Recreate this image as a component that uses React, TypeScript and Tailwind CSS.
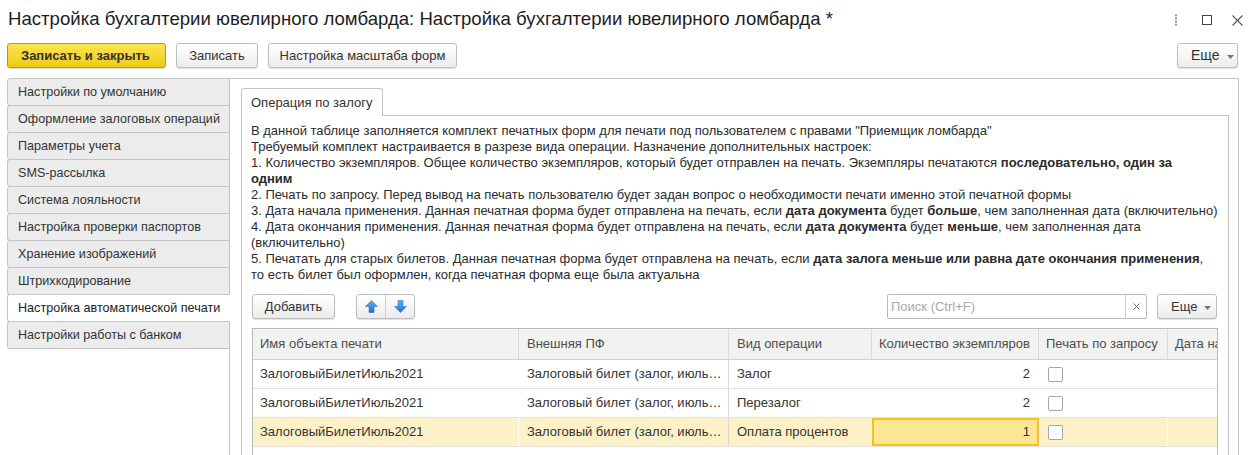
import React from 'react';

const FONT = "font-['Liberation_Sans',Arial,sans-serif]";

function Btn({ children, className }: { children: React.ReactNode; className?: string }) {
  return (
    <div
      className={
        'h-[25px] flex items-center border border-[#bdbdbd] rounded-[3px] bg-linear-to-b from-white to-[#ececec] shadow-[0_1px_1px_rgba(0,0,0,0.12)] text-[13px] text-[#333] whitespace-nowrap ' +
        (className || '')
      }
    >
      {children}
    </div>
  );
}

function Caret() {
  return (
    <svg width="7" height="4" viewBox="0 0 7 4" className="ml-[7px] mt-[2px]">
      <polygon points="0,0 7,0 3.5,4" fill="#777" />
    </svg>
  );
}

function ArrowUp() {
  return (
    <svg width="13" height="13" viewBox="0 0 13 13">
      <defs>
        <linearGradient id="gup" x1="0" y1="0" x2="0" y2="1">
          <stop offset="0" stopColor="#5fb2f2" />
          <stop offset="1" stopColor="#2173c9" />
        </linearGradient>
      </defs>
      <polygon points="6.5,0.5 12.5,6.5 9,6.5 9,12.5 4,12.5 4,6.5 0.5,6.5" fill="url(#gup)" stroke="#2a78c8" strokeWidth="0.6" strokeLinejoin="round" />
    </svg>
  );
}

function ArrowDown() {
  return (
    <svg width="13" height="13" viewBox="0 0 13 13">
      <defs>
        <linearGradient id="gdn" x1="0" y1="0" x2="0" y2="1">
          <stop offset="0" stopColor="#5fb2f2" />
          <stop offset="1" stopColor="#2173c9" />
        </linearGradient>
      </defs>
      <polygon points="4,0.5 9,0.5 9,6.5 12.5,6.5 6.5,12.5 0.5,6.5 4,6.5" fill="url(#gdn)" stroke="#2a78c8" strokeWidth="0.6" strokeLinejoin="round" />
    </svg>
  );
}

const navItems = [
  'Настройки по умолчанию',
  'Оформление залоговых операций',
  'Параметры учета',
  'SMS-рассылка',
  'Система лояльности',
  'Настройка проверки паспортов',
  'Хранение изображений',
  'Штрихкодирование',
  'Настройка автоматической печати',
  'Настройки работы с банком',
];

const rows = [
  { name: 'ЗалоговыйБилетИюль2021', pf: 'Залоговый билет (залог, июль 2021)', op: 'Залог', qty: 2, sel: false },
  { name: 'ЗалоговыйБилетИюль2021', pf: 'Залоговый билет (залог, июль 2021)', op: 'Перезалог', qty: 2, sel: false },
  { name: 'ЗалоговыйБилетИюль2021', pf: 'Залоговый билет (залог, июль 2021)', op: 'Оплата процентов', qty: 1, sel: true },
];

function Checkbox() {
  return <div className="ml-[9px] w-[15px] h-[15px] border border-[#a6a6a6] rounded-[2px] bg-white" />;
}

export default function App() {
  return (
    <div className={'w-[1254px] h-[455px] overflow-hidden bg-white text-[#333] relative ' + FONT}>
      {/* Title bar */}
      <div className="flex items-start h-[43px] pl-[8px] pt-[7px]">
        <div className="text-[18.6px] leading-[24px] text-[#1e1e1e] whitespace-nowrap">
          Настройка бухгалтерии ювелирного ломбарда: Настройка бухгалтерии ювелирного ломбарда *
        </div>
        <div className="ml-auto flex items-center h-[24px] mt-[1px] pr-[11px]">
          <svg width="4" height="12" viewBox="0 0 4 12">
            <circle cx="2" cy="1.3" r="1.1" fill="#8a8a8a" />
            <circle cx="2" cy="4.4" r="1.1" fill="#8a8a8a" />
            <circle cx="2" cy="7.6" r="1.1" fill="#8a8a8a" />
            <circle cx="2" cy="10.7" r="1.1" fill="#8a8a8a" />
          </svg>
          <svg width="10" height="10" viewBox="0 0 10 10" className="ml-[24px]">
            <rect x="0.5" y="0.5" width="9" height="9" fill="none" stroke="#444" strokeWidth="1" />
          </svg>
          <svg width="11" height="11" viewBox="0 0 11 11" className="ml-[20px]">
            <line x1="0.5" y1="0.5" x2="10.5" y2="10.5" stroke="#555" strokeWidth="1.1" />
            <line x1="10.5" y1="0.5" x2="0.5" y2="10.5" stroke="#555" strokeWidth="1.1" />
          </svg>
        </div>
      </div>

      {/* Command bar */}
      <div className="flex items-center h-[25px] pl-[7px] pr-[16px]">
        <div className="h-[25px] w-[159px] flex items-center pl-[13px] border border-[#b99f00] rounded-[3px] bg-linear-to-b from-[#fbe44c] to-[#f1cb0b] shadow-[0_1px_1px_rgba(0,0,0,0.15)] text-[13px] font-bold text-[#333] whitespace-nowrap">
          Записать и закрыть
        </div>
        <Btn className="ml-[10px] w-[82px] justify-center">Записать</Btn>
        <Btn className="ml-[10px] w-[189px] justify-center">Настройка масштаба форм</Btn>
        <Btn className="ml-auto w-[61px] pl-[13px]">
          <span className="text-[14px]">Еще</span>
          <Caret />
        </Btn>
      </div>

      {/* Body */}
      <div className="flex mt-[10px]">
        <div className="w-[223px] shrink-0 ml-[7px] -mr-px relative z-10 flex flex-col">
          {navItems.map((t, i) => {
            const sel = i === 8;
            return (
              <div
                key={t}
                className={
                  'h-[28px] flex items-center pl-[10px] text-[12.6px] whitespace-nowrap overflow-hidden border rounded-l-[3px] ' +
                  (i > 0 ? '-mt-px ' : '') +
                  (sel
                    ? 'bg-white border-[#c4c4c4] border-r-white text-[#222] relative z-10'
                    : 'bg-[#ececec] border-[#c4c4c4] text-[#333]')
                }
              >
                {t}
              </div>
            );
          })}
        </div>

        <div className="flex-1 min-w-0 mr-[15px] border-l border-t border-r border-[#c4c4c4] pl-[11px] pt-[9px] pr-[9px] h-[400px]">
          {/* Tab */}
          <div className="w-[142px] h-[28px] border border-b-0 border-[#c4c4c4] rounded-t-[3px] bg-white relative z-10 pl-[9px] flex items-center text-[13px] text-[#333] whitespace-nowrap">
            Операция по залогу
          </div>
          <div className="-mt-px min-w-0 border border-[#c4c4c4] pl-[10px] pr-[10px] pt-[7px] h-[400px] overflow-hidden">
            <div className="text-[13px] leading-[16px] text-[#2b2b2b] -ml-px">
              <div className="whitespace-nowrap">
                В данной таблице заполняется комплект печатных форм для печати под пользователем с правами "Приемщик ломбарда"
              </div>
              <div className="whitespace-nowrap">
                Требуемый комплект настраивается в разрезе вида операции. Назначение дополнительных настроек:
              </div>
              <div className="whitespace-nowrap">
                1. Количество экземпляров. Общее количество экземпляров, который будет отправлен на печать. Экземпляры печатаются{' '}
                <b>последовательно, один за</b>
              </div>
              <div className="whitespace-nowrap">
                <b>одним</b>
              </div>
              <div className="whitespace-nowrap">
                2. Печать по запросу. Перед вывод на печать пользователю будет задан вопрос о необходимости печати именно этой печатной формы
              </div>
              <div className="whitespace-nowrap">
                3. Дата начала применения. Данная печатная форма будет отправлена на печать, если <b>дата документа</b> будет{' '}
                <b>больше</b>, чем заполненная дата (включительно)
              </div>
              <div className="whitespace-nowrap">
                4. Дата окончания применения. Данная печатная форма будет отправлена на печать, если <b>дата документа</b> будет{' '}
                <b>меньше</b>, чем заполненная дата
              </div>
              <div className="whitespace-nowrap">(включительно)</div>
              <div className="whitespace-nowrap">
                5. Печатать для старых билетов. Данная печатная форма будет отправлена на печать, если{' '}
                <b>дата залога меньше или равна дате окончания применения</b>,
              </div>
              <div className="whitespace-nowrap">то есть билет был оформлен, когда печатная форма еще была актуальна</div>
            </div>

            {/* Toolbar */}
            <div className="flex items-center h-[25px] mt-[11px] mr-[1px]">
              <Btn className="w-[83px] justify-center">Добавить</Btn>
              <div className="ml-[21px] h-[25px] w-[59px] flex border border-[#bdbdbd] rounded-[3px] bg-linear-to-b from-white to-[#ececec] shadow-[0_1px_1px_rgba(0,0,0,0.12)]">
                <div className="w-[29px] flex items-center justify-center border-r border-[#cfcfcf]">
                  <ArrowUp />
                </div>
                <div className="flex-1 flex items-center justify-center">
                  <ArrowDown />
                </div>
              </div>
              <div className="ml-auto w-[260px] h-[25px] flex border border-[#b9b9b9] rounded-[2px] bg-white">
                <div className="flex-1 flex items-center pl-[3px] text-[13px] text-[#a9a9a9] whitespace-nowrap">Поиск (Ctrl+F)</div>
                <div className="w-[21px] border-l border-[#d0d0d0] flex items-center justify-center">
                  <svg width="7" height="7" viewBox="0 0 7 7">
                    <line x1="0.5" y1="0.5" x2="6.5" y2="6.5" stroke="#666" strokeWidth="1" />
                    <line x1="6.5" y1="0.5" x2="0.5" y2="6.5" stroke="#666" strokeWidth="1" />
                  </svg>
                </div>
              </div>
              <Btn className="ml-[10px] w-[60px] pl-[13px]">
                <span>Еще</span>
                <Caret />
              </Btn>
            </div>

            {/* Table */}
            <div className="mt-[9px] border border-[#b8b8b8] h-[200px] overflow-hidden">
              <div className="flex h-[31px] bg-[#f2f2f2] border-b border-[#d0d0d0] text-[13px] text-[#4d4d4d] whitespace-nowrap">
                <div className="w-[266px] shrink-0 border-r border-[#d9d9d9] flex items-center pl-[7px]">Имя объекта печати</div>
                <div className="w-[210px] shrink-0 border-r border-[#d9d9d9] flex items-center pl-[8px]">Внешняя ПФ</div>
                <div className="w-[143px] shrink-0 border-r border-[#d9d9d9] flex items-center pl-[8px]">Вид операции</div>
                <div className="w-[167px] shrink-0 border-r border-[#d9d9d9] flex items-center pl-[7px]">Количество экземпляров</div>
                <div className="w-[129px] shrink-0 border-r border-[#d9d9d9] flex items-center pl-[7px]">Печать по запросу</div>
                <div className="flex-1 min-w-0 overflow-hidden flex items-center pl-[7px]">Дата начала применения</div>
              </div>
              {rows.map((r, i) => (
                <div
                  key={i}
                  className={
                    'flex h-[29px] border-b border-[#e2e2e2] text-[13px] text-[#333] whitespace-nowrap ' +
                    (r.sel ? 'bg-[#fdf2c7]' : 'bg-white')
                  }
                >
                  <div
                    className={
                      'w-[266px] shrink-0 border-r flex items-center pl-[7px] ' +
                      (r.sel ? 'border-white' : 'border-transparent')
                    }
                  >
                    {r.name}
                  </div>
                  <div className="w-[210px] shrink-0 border-r border-[#d9d9d9] flex items-center pl-[8px] pr-[5px] min-w-0">
                    <span className="truncate">{r.pf}</span>
                  </div>
                  <div className="w-[143px] shrink-0 flex items-center pl-[8px]">{r.op}</div>
                  <div
                    className={
                      'w-[167px] shrink-0 flex items-center justify-end ' +
                      (r.sel ? 'bg-[#fce693] border-2 border-[#f4c41e] pr-[7px]' : 'pr-[9px]')
                    }
                  >
                    {r.qty}
                  </div>
                  <div
                    className={
                      'w-[129px] shrink-0 border-r flex items-center ' + (r.sel ? 'border-white' : 'border-transparent')
                    }
                  >
                    <Checkbox />
                  </div>
                  <div className="flex-1" />
                </div>
              ))}
            </div>
          </div>
        </div>
      </div>
    </div>
  );
}
